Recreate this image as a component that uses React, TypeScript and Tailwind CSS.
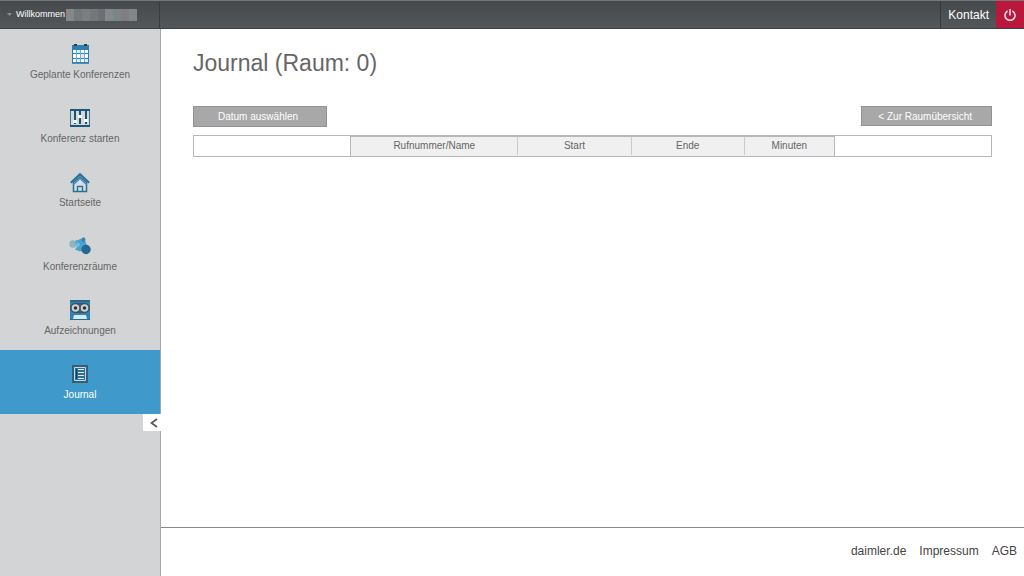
import { useState } from "react";
import type { ReactNode } from "react";

type NavItem = { label: string; icon: ReactNode };

function CalendarIcon() {
  return (
    <svg width="20" height="22" viewBox="0 0 20 22" aria-hidden="true">
      <path d="M2 2h17v19H2z" fill="#2d80ab" />
      <path d="M3 7h3v3H3zM11 7h3v3h-3zM15 7h3v3h-3zM3 11h3v4H3zM7 11h3v4H7zM15 11h3v4h-3zM3 16h3v3H3zM11 16h3v3h-3z" fill="#fff" />
      <path d="M7 7h3v3H7zM11 11h3v4h-3zM7 16h3v3H7zM15 16h3v3h-3z" fill="#d2effc" />
      <path d="M6 7h1v12H6zM10 7h1v12h-1zM14 7h1v12h-1z" fill="#6cb2d5" />
      <path d="M2 20h17v1H2z" fill="#5b8da8" />
      <path d="M4 1h3v2H4zM14 1h3v2h-3z" fill="#333b43" />
    </svg>
  );
}

function MixerIcon() {
  return (
    <svg width="20" height="20" viewBox="0 0 20 20" aria-hidden="true">
      <path d="M0 1h20v18H0z" fill="#d3dade" />
      <path d="M.5 2v16M19.500 2v16" stroke="#3f728f" />
      <path d="M0 1h20v2H0zM0 17h20v2H0z" fill="#1d5777" />
      <path d="M4 3h2v13H4zM9 3h2v13H9zM15 3h2v13h-2z" fill="#1d5475" />
      <path d="M3 12h4v3H3zM8 7h4v3H8zM14 11h4v3h-4z" fill="#fff" />
    </svg>
  );
}

function HouseIcon() {
  return (
    <svg width="20" height="21" viewBox="0 0 20 21" fill="none" stroke="#2b6f94" aria-hidden="true">
      <path d="M3.500 10.500v9h13v-9L10 5z" fill="#d3dfe6" strokeWidth="1.500" />
      <path d="M.8 10.800 10 2.200l9.200 8.600" strokeWidth="2" />
      <path d="M3 13 10 6.500l7 6.500" stroke="#4b8aac" strokeWidth="1.200" />
      <path d="M7.500 19.500v-5h5v5" strokeWidth="1.400" />
    </svg>
  );
}

function RoomsIcon() {
  return (
    <svg width="22" height="18" viewBox="0 0 22 18" aria-hidden="true">
      <circle cx="4" cy="7" r="3.700" fill="#94b1bf" />
      <path d="m6.500 3.500 2.500-.5 3-1.500 4 2 2 5-3 4-4 2-5-2 2-3-1.500-3z" fill="#4ba2d2" />
      <path d="m8 5 3 2-1 3-3-1z" fill="#75bce2" />
      <ellipse cx="14.500" cy="2.800" rx="2" ry="2.600" fill="#4785a5" />
      <circle cx="17" cy="12.500" r="4.700" fill="#26688f" />
    </svg>
  );
}

function TapeIcon() {
  return (
    <svg width="22" height="20" viewBox="0 0 22 20" aria-hidden="true">
      <path d="M1 0h20v20H1z" fill="#2d82b0" />
      <path d="M1 0h20v2H1zM1 19h20v1H1z" fill="#246c94" />
      <path d="M6 3h10a4.500 4.500 0 0 1 0 10H6a4.500 4.500 0 0 1 0-10z" fill="#41525e" />
      <circle cx="6.500" cy="8" r="3.800" fill="#cdd1d3" />
      <circle cx="15.500" cy="8" r="3.800" fill="#cdd1d3" />
      <circle cx="6.500" cy="8" r="1.800" fill="#30363c" />
      <circle cx="15.500" cy="8" r="1.800" fill="#30363c" />
      <path d="M10.500 4h1v8h-1z" fill="#56636d" />
      <path d="M5 15h12l1 4H4z" fill="#d5eaf4" />
    </svg>
  );
}

function JournalIcon() {
  return (
    <svg width="16" height="20" viewBox="0 0 16 20" aria-hidden="true">
      <path d="M0 1h16v18H0z" fill="#345f79" />
      <path d="M2.500 3.500h11v13h-11z" fill="#2c7099" stroke="#ccd5da" />
      <path d="M6 5h6v1H6zM6 8h6v1H6zM6 11h6v1H6zM6 14h6v1H6z" fill="#e3edf2" />
      <path d="M4 5h1v10H4z" fill="#173f57" />
    </svg>
  );
}

const NAV_ITEMS: NavItem[] = [
  { label: "Geplante Konferenzen", icon: <CalendarIcon /> },
  { label: "Konferenz starten", icon: <MixerIcon /> },
  { label: "Startseite", icon: <HouseIcon /> },
  { label: "Konferenzräume", icon: <RoomsIcon /> },
  { label: "Aufzeichnungen", icon: <TapeIcon /> },
  { label: "Journal", icon: <JournalIcon /> },
];

const COLUMNS = [
  { label: "Rufnummer/Name", width: "w-[21%]" },
  { label: "Start", width: "w-[14.2%]" },
  { label: "Ende", width: "w-[14.2%]" },
  { label: "Minuten", width: "w-[11.2%]" },
];

// Tiles that cover the user name
const MASK_TILES = [
  "bg-[#85888b]",
  "bg-[#74787b]",
  "bg-[#7d7c80]",
  "bg-[#74787c]",
  "bg-[#6c7074]",
  "bg-[#85888a]",
  "bg-[#7b8583]",
  "bg-[#7d7f81]",
  "bg-[#858486]",
];

function Header() {
  return (
    <header className="flex h-[29px] items-stretch border-t border-b border-t-[#74787a] border-b-[#3d4043] bg-linear-to-b from-[#46494c] to-[#54575a] text-white">
      <button className="flex w-40 items-center border-r border-[#393c3e] pl-[7px] text-[9px]">
        <svg width="5" height="3" viewBox="0 0 5 3" className="mr-1" aria-hidden="true">
          <path d="M0 0h5L2.500 3z" fill="#8b8e90" />
        </svg>
        Willkommen
        <span className="ml-px flex h-3 w-[71px]">
          {MASK_TILES.map((tile, i) => (
            <span key={i} className={`flex-1 ${tile}`} />
          ))}
        </span>
      </button>
      <nav className="ml-auto flex items-stretch">
        <a href="#kontakt" className="flex items-center border-l border-[#36393b] px-[7px] text-[12px]">
          Kontakt
        </a>
        <button className="flex w-7 items-center justify-center bg-[#b9173c]" aria-label="Abmelden">
          <svg width="12" height="12" viewBox="0 0 12 12" fill="none" stroke="#f3dbe1" strokeWidth="1.600" aria-hidden="true">
            <path d="M3.600 2a5 5 0 1 0 4.800 0M6 0v6.500" />
          </svg>
        </button>
      </nav>
    </header>
  );
}

function Sidebar({ active, onSelect }: { active: string; onSelect: (label: string) => void }) {
  return (
    <aside className="flex w-[161px] shrink-0 flex-col border-r border-[#a5a8aa] bg-[#d3d4d5] pt-px">
      <nav className="flex flex-col">
        {NAV_ITEMS.map((item) => (
          <button
            key={item.label}
            onClick={() => onSelect(item.label)}
            className={`flex h-16 flex-col items-center pt-3 text-[10px] leading-[17px] ${
              active === item.label ? "bg-[#3f9acb] text-white" : "text-[#666]"
            }`}
          >
            <span className="flex h-6 items-center justify-center">{item.icon}</span>
            {item.label}
          </button>
        ))}
      </nav>
      <button
        className="-mr-px flex h-[17px] w-[18px] items-center justify-center self-end bg-white pl-1"
        aria-label="Menü einklappen"
      >
        <svg width="8" height="10" viewBox="0 0 8 10" fill="none" stroke="#56595c" strokeWidth="1.800" aria-hidden="true">
          <path d="M7 1 1.500 5 7 9" />
        </svg>
      </button>
    </aside>
  );
}

export default function App() {
  const [active, setActive] = useState("Journal");

  return (
    <div className="flex min-h-screen flex-col bg-white font-['Liberation_Sans',Arial,sans-serif]">
      <Header />
      <div className="flex flex-1">
        <Sidebar active={active} onSelect={setActive} />
        <div className="flex flex-1 flex-col">
          <main className="flex-1 px-8 pt-5">
            <h1 className="text-[23px] leading-7 text-[#666]">Journal (Raum: 0)</h1>
            <div className="mt-[29px] flex items-start justify-between text-[10px] text-white">
              <button className="h-[21px] border border-[#939393] bg-[#a8a8a8] pr-7 pl-6">Datum auswählen</button>
              <button className="h-5 border border-[#939393] bg-[#a8a8a8] pr-[19px] pl-4">&lt; Zur Raumübersicht</button>
            </div>
            <table className="mt-2 w-full table-fixed border-collapse border border-[#b5b7bb] text-[10px] text-[#666]">
              <thead>
                <tr className="h-[21px]">
                  <td />
                  {COLUMNS.map((col, i) => (
                    <th
                      key={col.label}
                      scope="col"
                      className={`${col.width} bg-[#f0f0f0] p-0 align-top font-normal ${
                        i === 0 ? "border-l border-[#b5b7bb]" : ""
                      } ${i === COLUMNS.length - 1 ? "border-r border-[#b5b7bb]" : ""}`}
                    >
                      <span
                        className={`block h-[19px] border-t border-t-[#b5b7bb] leading-[18px] ${
                          i < COLUMNS.length - 1 ? "border-r border-r-[#c8cacc]" : ""
                        }`}
                      >
                        {col.label}
                      </span>
                    </th>
                  ))}
                  <td />
                </tr>
              </thead>
            </table>
          </main>
          <footer className="flex h-[49px] items-center justify-end gap-[13px] border-t border-[#88898b] pr-[7px] pb-0.5 text-[12px] text-[#444]">
            <a href="#daimler">daimler.de</a>
            <a href="#impressum">Impressum</a>
            <a href="#agb">AGB</a>
          </footer>
        </div>
      </div>
    </div>
  );
}
